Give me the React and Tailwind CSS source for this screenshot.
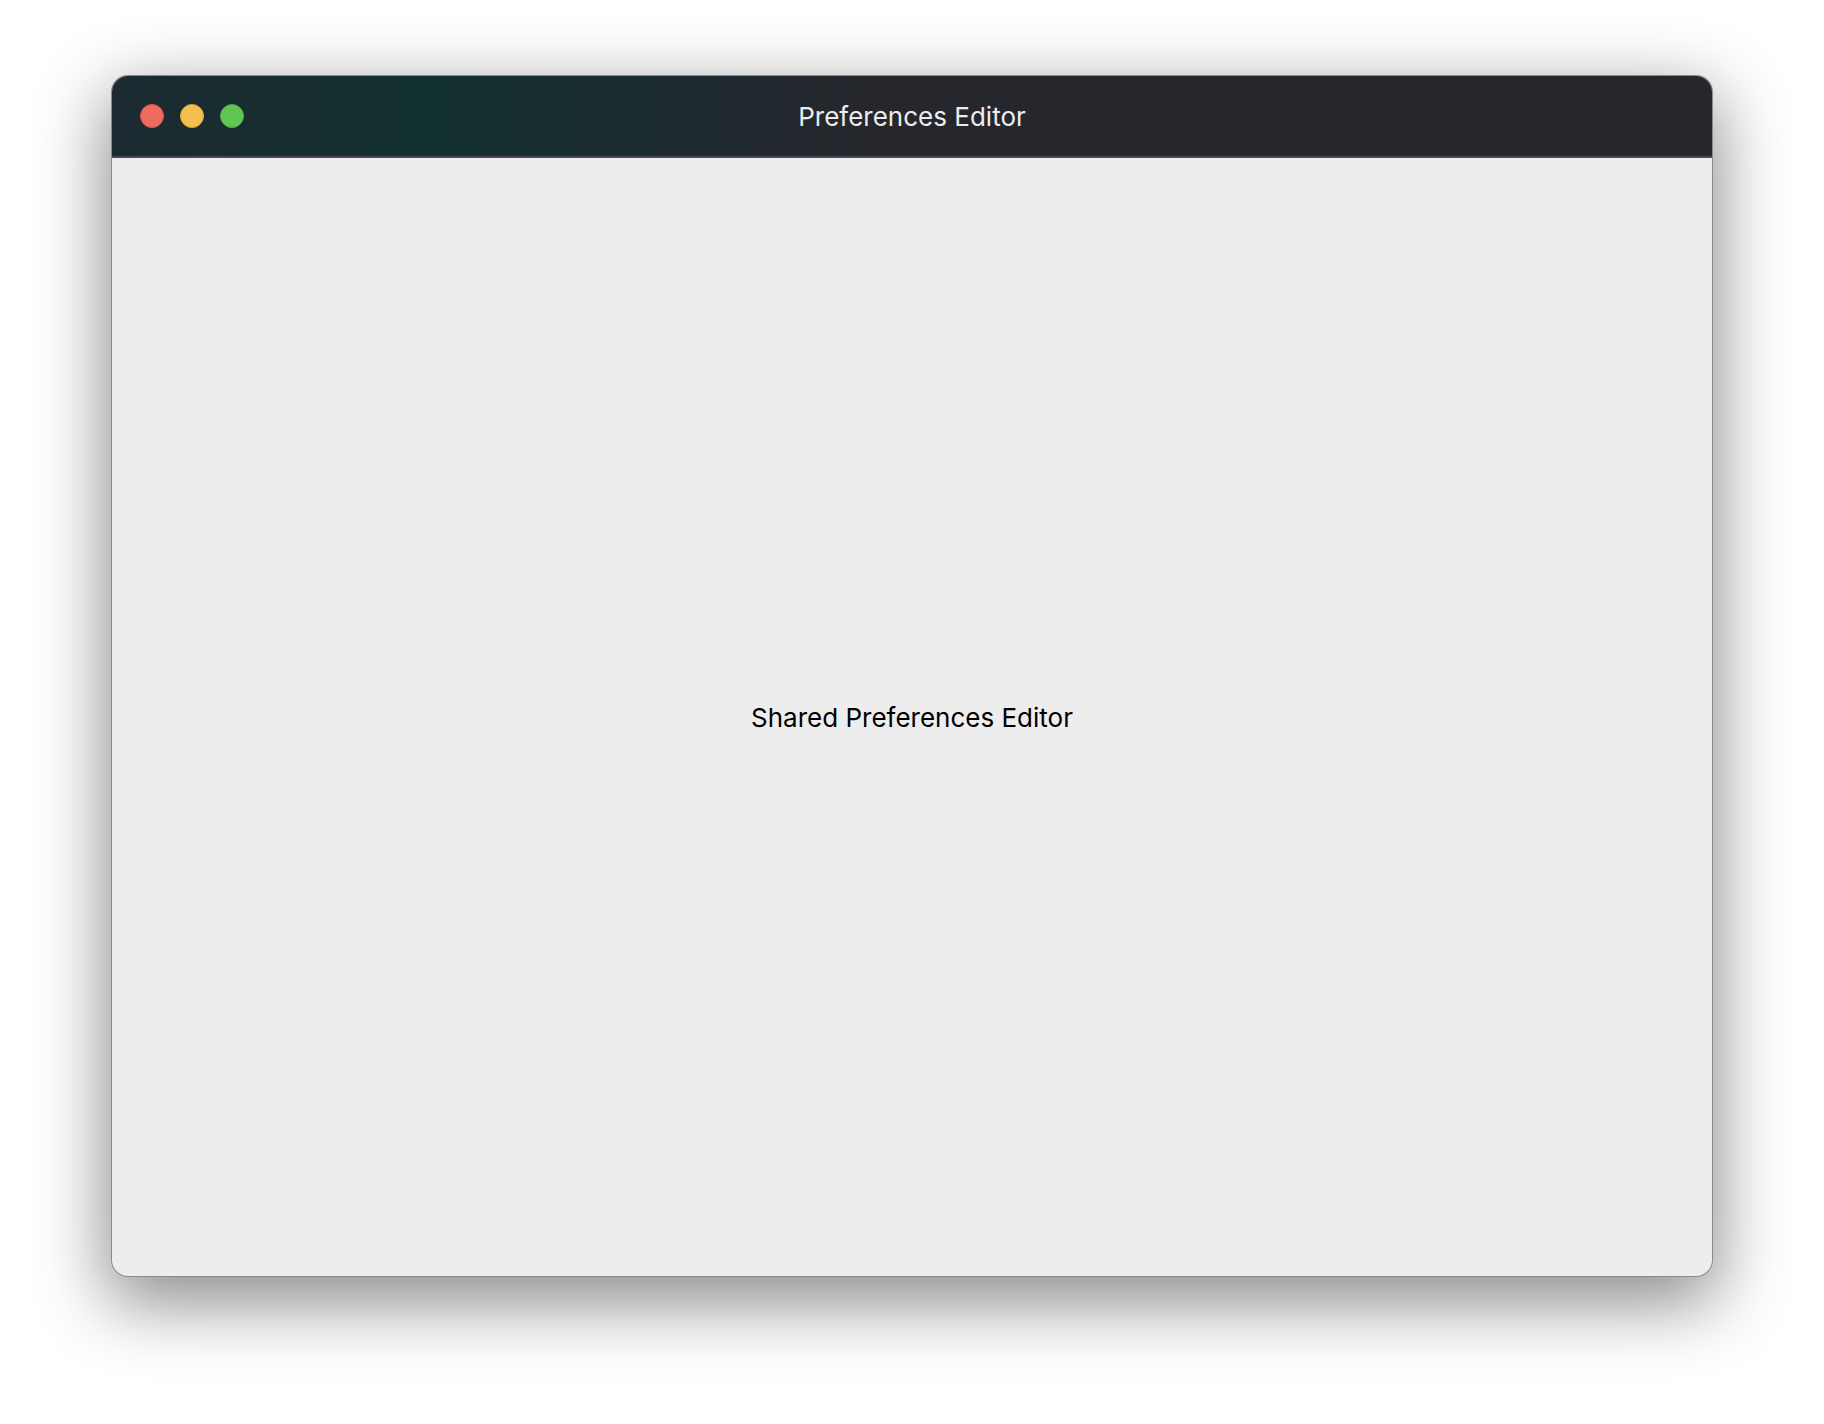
import React from 'react';

const TrafficLights = () => (
    <div className="flex items-center gap-4">
        <span className="block w-6 h-6 rounded-full bg-[#ee6a5f] border border-[#d65a50]" />
        <span className="block w-6 h-6 rounded-full bg-[#f5bf4f] border border-[#dba83f]" />
        <span className="block w-6 h-6 rounded-full bg-[#61c554] border border-[#52ad47]" />
    </div>
);

const App = () => {
    return (
        <div className="w-[1824px] h-[1424px] bg-white pt-[76px] pl-[112px] font-['Inter','Noto_Sans',sans-serif]">
            {/* Window */}
            <div className="w-[1600px] h-[1200px] rounded-2xl overflow-hidden flex flex-col bg-[#ededed] ring-1 ring-[#8a8a8a] shadow-[0_22px_70px_6px_rgba(0,0,0,0.45)]">
                {/* Title bar */}
                <div className="relative h-[82px] shrink-0 flex items-center px-7 border-b-2 border-[#4a4a56] bg-[linear-gradient(to_right,#1c2a30_0%,#12302f_20%,#1d2b30_34%,#26272d_48%,#26272d_100%)]">
                    <TrafficLights />
                    <p className="absolute inset-x-0 text-center text-[26px] text-[#ececef] pointer-events-none">
                        Preferences Editor
                    </p>
                </div>

                {/* Content */}
                <div className="flex-1 flex items-center justify-center">
                    <p className="text-[26px] text-black">Shared Preferences Editor</p>
                </div>
            </div>
        </div>
    );
};

export default App;
